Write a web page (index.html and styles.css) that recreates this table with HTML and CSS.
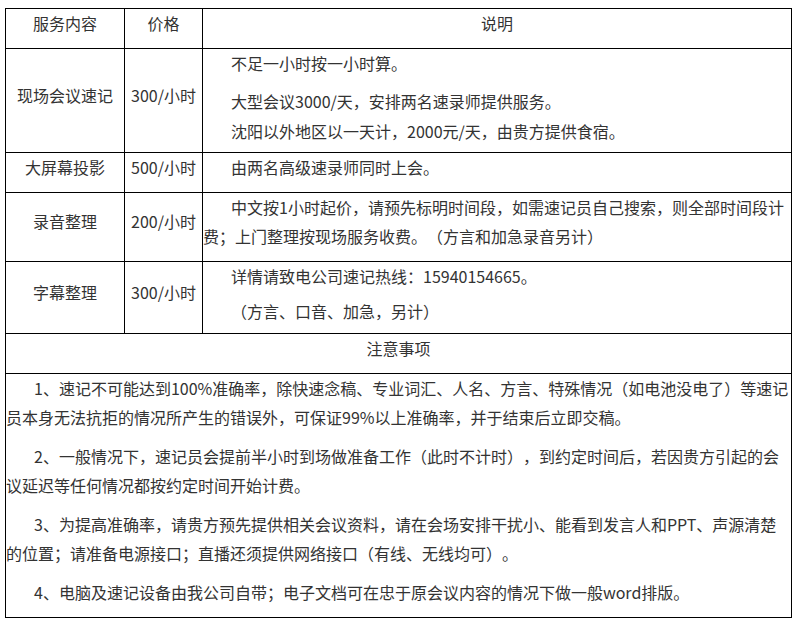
FILE: index.html
```html
<!DOCTYPE html>
<html lang="zh-CN">
<head>
<meta charset="utf-8">
<title>速记服务价格</title>
<link rel="stylesheet" href="styles.css">
</head>
<body>
<div class="page">
  <table class="price">
    <colgroup>
      <col class="col-service">
      <col class="col-price">
      <col class="col-desc">
    </colgroup>
    <tbody>
      <tr>
        <td class="center"><p>服务内容</p></td>
        <td class="center"><p>价格</p></td>
        <td class="center"><p>说明</p></td>
      </tr>
      <tr>
        <td class="center"><p>现场会议速记</p></td>
        <td class="center"><p>300/小时</p></td>
        <td class="desc">
          <p class="gap-9">不足一小时按一小时算。</p>
          <p class="gap-0">大型会议3000/天，安排两名速录师提供服务。</p>
          <p class="gap-6">沈阳以外地区以一天计，2000元/天，由贵方提供食宿。</p>
        </td>
      </tr>
      <tr>
        <td class="center"><p>大屏幕投影</p></td>
        <td class="center"><p>500/小时</p></td>
        <td class="desc"><p>由两名高级速录师同时上会。</p></td>
      </tr>
      <tr>
        <td class="center"><p>录音整理</p></td>
        <td class="center"><p>200/小时</p></td>
        <td class="desc"><p>中文按1小时起价，请预先标明时间段，如需速记员自己搜索，则全部时间段计费；上门整理按现场服务收费。（方言和加急录音另计）</p></td>
      </tr>
      <tr>
        <td class="center"><p>字幕整理</p></td>
        <td class="center"><p>300/小时</p></td>
        <td class="desc tight">
          <p>详情请致电公司速记热线：15940154665。</p>
          <p>（方言、口音、加急，另计）</p>
        </td>
      </tr>
      <tr>
        <td class="center" colspan="3"><p>注意事项</p></td>
      </tr>
      <tr>
        <td class="notes" colspan="3">
          <p>1、速记不可能达到100%准确率，除快速念稿、专业词汇、人名、方言、特殊情况（如电池没电了）等速记员本身无法抗拒的情况所产生的错误外，可保证99%以上准确率，并于结束后立即交稿。</p>
          <p>2、一般情况下，速记员会提前半小时到场做准备工作（此时不计时），到约定时间后，若因贵方引起的会议延迟等任何情况都按约定时间开始计费。</p>
          <p>3、为提高准确率，请贵方预先提供相关会议资料，请在会场安排干扰小、能看到发言人和PPT、声源清楚的位置；请准备电源接口；直播还须提供网络接口（有线、无线均可）。</p>
          <p>4、电脑及速记设备由我公司自带；电子文档可在忠于原会议内容的情况下做一般word排版。</p>
        </td>
      </tr>
    </tbody>
  </table>
</div>
</body>
</html>
```

FILE: styles.css
```css
html, body {
  margin: 0;
  padding: 0;
  background: #ffffff;
}

body {
  font-family: "Noto Sans CJK SC", "Microsoft YaHei", sans-serif;
  font-size: 16px;
  color: #333333;
  text-spacing-trim: space-all;
}

.page {
  padding: 8px 0 0 5px;
}

.price {
  border-collapse: collapse;
  table-layout: fixed;
  width: 787px;
}

.col-service { width: 119px; }
.col-price { width: 78px; }
.col-desc { width: 589px; }

.price td {
  border: 1px solid #000000;
  padding: 0;
  vertical-align: middle;
}

.price p {
  margin: 0 0 10px;
  line-height: 29px;
}

.center {
  text-align: center;
}

.desc p,
.notes p {
  text-indent: 28px;
}

.desc p.gap-9 { margin-bottom: 9px; }
.desc p.gap-0 { margin-bottom: 0.5px; }
.desc p.gap-6 { margin-bottom: 6px; }

.desc.tight p {
  margin-bottom: 6.5px;
}
```
